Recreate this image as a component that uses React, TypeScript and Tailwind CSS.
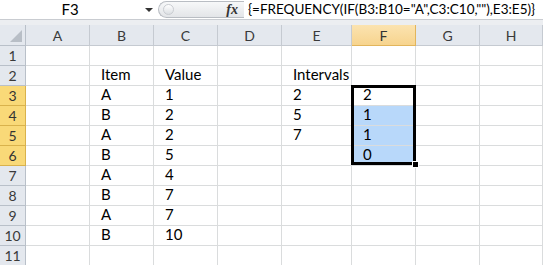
import React from "react";

const cols = ["A", "B", "C", "D", "E", "F", "G", "H"];

// cell contents keyed by row -> column letter
const data: Record<number, Record<string, string>> = {
  1: {},
  2: { B: "Item", C: "Value", E: "Intervals" },
  3: { B: "A", C: "1", E: "2", F: "2" },
  4: { B: "B", C: "2", E: "5", F: "1" },
  5: { B: "A", C: "2", E: "7", F: "1" },
  6: { B: "B", C: "5", F: "0" },
  7: { B: "A", C: "4" },
  8: { B: "B", C: "7" },
  9: { B: "A", C: "7" },
  10: { B: "B", C: "10" },
  11: {},
};

const font = { fontFamily: "Lato, 'Open Sans', sans-serif" };

function FormulaBar() {
  return (
    <div className="flex h-[20px] items-center border-b border-[#c9ccd1] bg-white">
      <div className="relative flex h-full w-[156px] shrink-0 items-center">
        <span className="w-[140px] text-center text-[15px] text-black">F3</span>
        <span className="absolute left-[145px] top-[8px] h-0 w-0 border-x-[4px] border-t-[4px] border-x-transparent border-t-[#333]" />
      </div>
      <div className="ml-[2px] flex h-[17px] w-[86px] shrink-0 items-center justify-between rounded-l-full border border-r-0 border-[#b9bdc3] bg-gradient-to-b from-[#f7f8f9] to-[#e3e5e8] pl-[4px] pr-[6px]">
        <span className="h-[11px] w-[11px] rounded-full border border-[#c9ccd1] bg-gradient-to-b from-[#ffffff] to-[#dcdfe3]" />
        <span className="font-['Liberation_Serif',serif] text-[14px] font-bold italic text-[#333]">fx</span>
      </div>
      <div className="ml-[4px] whitespace-nowrap text-[13.5px] text-black">
        {'{=FREQUENCY(IF(B3:B10="A",C3:C10,""),E3:E5)}'}
      </div>
    </div>
  );
}

function ColHeader({ c }: { c: string }) {
  const sel = c === "F";
  return (
    <div
      className={`flex h-[21px] items-center justify-center border-r border-b text-[14px] ${
        sel
          ? "border-[#e2b55c] bg-gradient-to-b from-[#fbe3b0] to-[#f7d48e] text-[#333]"
          : "border-[#c5cad1] bg-[#e4e8ee] text-[#3a3a3a]"
      }`}
    >
      {c}
    </div>
  );
}

export default function App() {
  const rows = Object.keys(data).map(Number);
  return (
    <div className="relative h-[265px] w-[543px] overflow-hidden bg-white" style={font}>
      <FormulaBar />
      <div className="h-[5px] bg-[#eceef1]" />
      <div className="grid grid-cols-[26px_64px_64px_64px_64px_70px_64px_64px_1fr]">
        <div className="relative h-[21px] border-r border-b border-[#b9c0c9] bg-[#e4e8ee]">
          <span className="absolute bottom-[3px] right-[3px] h-0 w-0 border-b-[12px] border-l-[12px] border-l-transparent border-b-[#b8bec6]" />
        </div>
        {cols.map((c) => (
          <ColHeader key={c} c={c} />
        ))}
        {rows.map((r) => {
          const hl = r >= 3 && r <= 6;
          return (
            <React.Fragment key={r}>
              <div
                className={`flex h-[20px] items-end justify-center border-r border-b pb-[2px] text-[14px] leading-none ${
                  hl
                    ? "border-[#d9b24c] bg-[#f9d978] text-[#333]"
                    : "border-[#b9c0c9] bg-[#e4e8ee] text-[#3a3a3a]"
                }`}
              >
                {r}
              </div>
              {cols.map((c) => {
                const blue = c === "F" && r >= 4 && r <= 6;
                return (
                  <div
                    key={c}
                    className={`flex h-[20px] items-end border-r border-b border-[#dadcdd] pb-[3px] pl-[11px] text-[15px] leading-none text-black ${
                      blue ? "bg-[#b8d8fa]" : ""
                    }`}
                  >
                    {data[r][c] ?? ""}
                  </div>
                );
              })}
            </React.Fragment>
          );
        })}
      </div>
      {/* selection range F3:F6 */}
      <div className="pointer-events-none absolute left-[351px] top-[85px] h-[80px] w-[65px] border-[3px] border-black" />
      <div className="pointer-events-none absolute left-[412px] top-[161px] h-[7px] w-[7px] border border-white bg-black" />
    </div>
  );
}
